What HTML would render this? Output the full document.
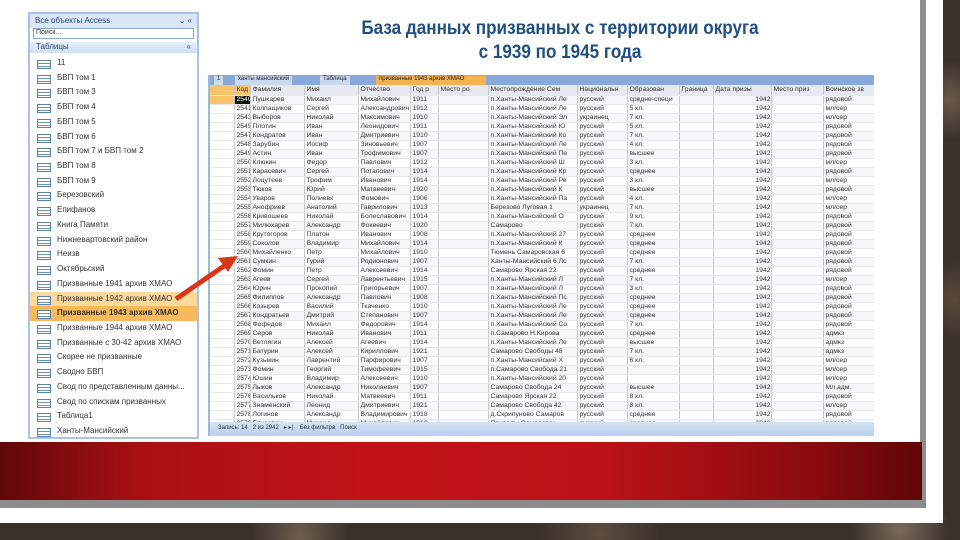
<!DOCTYPE html>
<html><head><meta charset="utf-8">
<style>
*{margin:0;padding:0;box-sizing:border-box}
body{width:960px;height:540px;overflow:hidden;position:relative;background:#3b302a;font-family:"Liberation Sans",sans-serif}
.bg{position:absolute;inset:0;background:
 radial-gradient(circle at 950px 100px,#6a5a4c,transparent 40px),
 radial-gradient(circle at 955px 300px,#5a4a3c,transparent 40px),
 radial-gradient(circle at 900px 530px,#7a6a5c,transparent 50px),
 radial-gradient(circle at 300px 535px,#6e5e50,transparent 50px),
 radial-gradient(circle at 600px 535px,#5d4d40,transparent 60px),
 #3b302a}
.slide{position:absolute;left:0;top:0;width:943px;height:523px;background:#fff}
.rborder{position:absolute;left:920px;top:0;width:6px;height:508px;background:#8f8f8f}
.band{position:absolute;left:0;top:442px;width:922px;height:58px;background:linear-gradient(90deg,#600808 0%,#a81014 15%,#c21318 40%,#bc1217 65%,#8a0b0e 88%,#5e0606 100%)}
.gbar{position:absolute;left:0;top:500px;width:926px;height:8px;background:#8c8c8c}
.nav{position:absolute;left:28px;top:12px;width:171px;height:427px;background:#fff;border:2px solid #a9c3e6;font-size:8px;color:#333}
.nav .tb{height:14px;background:#dbe7f7;padding:2px 5px;color:#2a4a7a}
.nav .srch{margin:0 3px;height:11px;border:1px solid #8aa8d6;font-size:7px;padding-left:2px}
.nav .sec{margin-top:3px;height:11px;background:linear-gradient(#e8f0fb,#cfdff4);padding-left:6px;color:#2a4a7a;margin-bottom:3px}
.it{height:14.72px;line-height:14.72px;padding-left:27px;position:relative;white-space:nowrap;overflow:hidden}
.it:before{content:"";position:absolute;left:7px;top:4px;width:12px;height:7px;border:1px solid #5a7fb0;background:repeating-linear-gradient(#fff 0 2px,#6d8fc0 2px 3px)}
.h1{background:#fcd99c}.h2{background:#f7b95a;font-weight:bold}
.title{position:absolute;left:260px;width:600px;text-align:center;color:#1f4f80;font-weight:bold;font-size:19px;transform:scaleX(.9)}
.tbl{position:absolute;left:208px;top:75px;width:666px;height:361px;background:#fff;border-left:2px solid #9bb7dc;overflow:hidden}
.tabs{height:10px;background:#87a9dc;font-size:6px;position:relative}
.tabs span{position:absolute;top:1px;height:9px;background:#c9d9f0;padding:0 3px;color:#223}
table{border-collapse:collapse;table-layout:fixed;width:664px;font-size:6.8px;color:#333}
td,th{height:8.35px;line-height:8px;border-right:1px solid #c8c8c8;border-bottom:1px solid #e8e8e8;white-space:nowrap;overflow:hidden;padding-left:2px;font-weight:normal;text-align:left}
th{background:#e6e9ef;color:#333;height:10px}
tr:nth-child(even) td{background:#f6f7f9}
td.s{background:#fff!important;border-right:1px solid #ccc}
.foot{position:absolute;left:0;bottom:0;width:100%;height:14px;background:linear-gradient(#d5e3f6,#b9cfee);font-size:6px;color:#333;padding:2px 8px}
.arrow{position:absolute;left:0;top:0}
</style></head><body>
<div class="bg"></div>
<div class="slide"></div>
<div class="rborder"></div>
<div class="band"></div>
<div class="gbar"></div>

<div class="nav">
<div class="tb">Все объекты Access <span style="float:right">⌄ «</span></div>
<div class="srch">Поиск...</div>
<div class="sec">Таблицы <span style="float:right;padding-right:6px">«</span></div>
<div class="it">11</div>
<div class="it">БВП том 1</div>
<div class="it">БВП том 3</div>
<div class="it">БВП том 4</div>
<div class="it">БВП том 5</div>
<div class="it">БВП том 6</div>
<div class="it">БВП том 7 и БВП том 2</div>
<div class="it">БВП том 8</div>
<div class="it">БВП том 9</div>
<div class="it">Березовский</div>
<div class="it">Епифанов</div>
<div class="it">Книга Памяти</div>
<div class="it">Нижневартовский район</div>
<div class="it">Неизв</div>
<div class="it">Октябрьский</div>
<div class="it">Призванные 1941 архив ХМАО</div>
<div class="it h1">Призванные 1942 архив ХМАО</div>
<div class="it h2">Призванные 1943 архив ХМАО</div>
<div class="it">Призванные 1944 архив ХМАО</div>
<div class="it">Призванные с 30-42 архив ХМАО</div>
<div class="it">Скорее не призванные</div>
<div class="it">Сводно БВП</div>
<div class="it">Свод по представленным данны...</div>
<div class="it">Свод по спискам призванных</div>
<div class="it">Таблица1</div>
<div class="it">Ханты-Мансийский</div>
</div>

<div class="title" style="top:18px">База данных призванных  с территории округа</div>
<div class="title" style="top:42px">с 1939 по 1945 года</div>

<div class="tbl">
<div class="tabs"><span style="left:4px">1</span><span style="left:25px">ханты мансийский</span><span style="left:110px">Таблица</span><span style="left:166px;background:#f6b24f;width:110px">призванные 1943 архив ХМАО</span></div>
<table>
<colgroup><col style="width:24px"><col style="width:16px"><col style="width:54px"><col style="width:54px"><col style="width:52px"><col style="width:28px"><col style="width:50px"><col style="width:89px"><col style="width:50px"><col style="width:52px"><col style="width:34px"><col style="width:58px"><col style="width:52px"><col style="width:51px"></colgroup>
<tr><th style="background:#f6c46a"></th><th style="background:#f6c46a">Код</th><th>Фамилия</th><th>Имя</th><th>Отчество</th><th>Год р</th><th>Место ро</th><th>Местопрождение Сем</th><th>Национальн</th><th>Образован</th><th>Граница</th><th>Дата призы</th><th>Место приз</th><th>Воинское зв</th></tr>
<tr><td class="s" style="background:#f8c46a!important"></td><td style="background:#111;color:#fff">2540</td><td>Пушкарев</td><td>Михаил</td><td>Михайлович</td><td>1911</td><td></td><td>п.Ханты-Мансийский Ле</td><td>русский</td><td>средне-специ</td><td></td><td style="text-align:right">1942</td><td></td><td>рядовой</td></tr>
<tr><td class="s"></td><td>2541</td><td>Колпащиков</td><td>Сергей</td><td>Александрович</td><td>1912</td><td></td><td>п.Ханты-Мансийский Ле</td><td>русский</td><td>5 кл.</td><td></td><td style="text-align:right">1942</td><td></td><td>мл/сер</td></tr>
<tr><td class="s"></td><td>2543</td><td>Выборов</td><td>Николай</td><td>Максимович</td><td>1910</td><td></td><td>п.Ханты-Мансийский Эл</td><td>украинец</td><td>7 кл.</td><td></td><td style="text-align:right">1942</td><td></td><td>мл/сер</td></tr>
<tr><td class="s"></td><td>2545</td><td>Плотин</td><td>Иван</td><td>Леонидович</td><td>1911</td><td></td><td>п.Ханты-Мансийский Ю</td><td>русский</td><td>5 кл.</td><td></td><td style="text-align:right">1942</td><td></td><td>рядовой</td></tr>
<tr><td class="s"></td><td>2547</td><td>Кондратов</td><td>Иван</td><td>Дмитриевич</td><td>1910</td><td></td><td>п.Ханты-Мансийский Ко</td><td>русский</td><td>7 кл.</td><td></td><td style="text-align:right">1942</td><td></td><td>рядовой</td></tr>
<tr><td class="s"></td><td>2548</td><td>Зарубин</td><td>Иосиф</td><td>Зиновьевич</td><td>1907</td><td></td><td>п.Ханты-Мансийский Ле</td><td>русский</td><td>4 кл.</td><td></td><td style="text-align:right">1942</td><td></td><td>рядовой</td></tr>
<tr><td class="s"></td><td>2549</td><td>Астин</td><td>Иван</td><td>Трофимович</td><td>1907</td><td></td><td>п.Ханты-Мансийский Пе</td><td>русский</td><td>высшее</td><td></td><td style="text-align:right">1942</td><td></td><td>рядовой</td></tr>
<tr><td class="s"></td><td>2550</td><td>Клюкин</td><td>Федор</td><td>Павлович</td><td>1912</td><td></td><td>п.Ханты-Мансийский Ш</td><td>русский</td><td>3 кл.</td><td></td><td style="text-align:right">1942</td><td></td><td>мл/сер</td></tr>
<tr><td class="s"></td><td>2551</td><td>Карасевич</td><td>Сергей</td><td>Потапович</td><td>1914</td><td></td><td>п.Ханты-Мансийский Кр</td><td>русский</td><td>среднее</td><td></td><td style="text-align:right">1942</td><td></td><td>рядовой</td></tr>
<tr><td class="s"></td><td>2552</td><td>Лоцутеев</td><td>Трофим</td><td>Иванович</td><td>1914</td><td></td><td>п.Ханты-Мансийский Ре</td><td>русский</td><td>3 кл.</td><td></td><td style="text-align:right">1942</td><td></td><td>мл/сер</td></tr>
<tr><td class="s"></td><td>2553</td><td>Тюков</td><td>Юрий</td><td>Матвеевич</td><td>1920</td><td></td><td>п.Ханты-Мансийский К</td><td>русский</td><td>высшее</td><td></td><td style="text-align:right">1942</td><td></td><td>рядовой</td></tr>
<tr><td class="s"></td><td>2554</td><td>Уваров</td><td>Полиевк</td><td>Фомович</td><td>1906</td><td></td><td>п.Ханты-Мансийский Па</td><td>русский</td><td>4 кл.</td><td></td><td style="text-align:right">1942</td><td></td><td>мл/сер</td></tr>
<tr><td class="s"></td><td>2555</td><td>Анофриев</td><td>Анатолий</td><td>Гаврилович</td><td>1913</td><td></td><td>Березово Луговая 1</td><td>украинец</td><td>7 кл.</td><td></td><td style="text-align:right">1942</td><td></td><td>мл/сер</td></tr>
<tr><td class="s"></td><td>2556</td><td>Кривошеев</td><td>Николай</td><td>Болеславович</td><td>1914</td><td></td><td>п.Ханты-Мансийский О</td><td>русский</td><td>9 кл.</td><td></td><td style="text-align:right">1942</td><td></td><td>рядовой</td></tr>
<tr><td class="s"></td><td>2557</td><td>Милюхарев</td><td>Александр</td><td>Фокеевич</td><td>1920</td><td></td><td>Самарово</td><td>русский</td><td>7 кл.</td><td></td><td style="text-align:right">1942</td><td></td><td>рядовой</td></tr>
<tr><td class="s"></td><td>2558</td><td>Крутогоров</td><td>Платон</td><td>Иванович</td><td>1908</td><td></td><td>п.Ханты-Мансийский 27</td><td>русский</td><td>среднее</td><td></td><td style="text-align:right">1942</td><td></td><td>рядовой</td></tr>
<tr><td class="s"></td><td>2559</td><td>Соколов</td><td>Владимир</td><td>Михайлович</td><td>1914</td><td></td><td>п.Ханты-Мансийский К</td><td>русский</td><td>среднее</td><td></td><td style="text-align:right">1942</td><td></td><td>рядовой</td></tr>
<tr><td class="s"></td><td>2560</td><td>Михайленко</td><td>Петр</td><td>Михайлович</td><td>1910</td><td></td><td>Тюмень Самаровская 6</td><td>русский</td><td>среднее</td><td></td><td style="text-align:right">1942</td><td></td><td>рядовой</td></tr>
<tr><td class="s"></td><td>2561</td><td>Сумкин</td><td>Гурий</td><td>Родионович</td><td>1907</td><td></td><td>Ханты-Мансийский 6.Лс</td><td>русский</td><td>7 кл.</td><td></td><td style="text-align:right">1942</td><td></td><td>рядовой</td></tr>
<tr><td class="s"></td><td>2562</td><td>Фомин</td><td>Петр</td><td>Алексеевич</td><td>1914</td><td></td><td>Самарово Ярская 22</td><td>русский</td><td>среднее</td><td></td><td style="text-align:right">1942</td><td></td><td>рядовой</td></tr>
<tr><td class="s"></td><td>2563</td><td>Агеев</td><td>Сергей</td><td>Лаврентьевич</td><td>1915</td><td></td><td>п.Ханты-Мансийский Л</td><td>русский</td><td>7 кл.</td><td></td><td style="text-align:right">1942</td><td></td><td>мл/сер</td></tr>
<tr><td class="s"></td><td>2564</td><td>Юрин</td><td>Прокопий</td><td>Григорьевич</td><td>1907</td><td></td><td>п.Ханты-Мансийский Л</td><td>русский</td><td>3 кл.</td><td></td><td style="text-align:right">1942</td><td></td><td>рядовой</td></tr>
<tr><td class="s"></td><td>2565</td><td>Филиппов</td><td>Александр</td><td>Павлович</td><td>1908</td><td></td><td>п.Ханты-Мансийский Пс</td><td>русский</td><td>среднее</td><td></td><td style="text-align:right">1942</td><td></td><td>рядовой</td></tr>
<tr><td class="s"></td><td>2566</td><td>Козырев</td><td>Василий</td><td>Ткаченко</td><td>1910</td><td></td><td>п.Ханты-Мансийский Ле</td><td>русский</td><td>среднее</td><td></td><td style="text-align:right">1942</td><td></td><td>рядовой</td></tr>
<tr><td class="s"></td><td>2567</td><td>Кондратьев</td><td>Дмитрий</td><td>Степанович</td><td>1907</td><td></td><td>п.Ханты-Мансийский Ле</td><td>русский</td><td>среднее</td><td></td><td style="text-align:right">1942</td><td></td><td>рядовой</td></tr>
<tr><td class="s"></td><td>2568</td><td>Фофедов</td><td>Михаил</td><td>Федорович</td><td>1914</td><td></td><td>п.Ханты-Мансийский Со</td><td>русский</td><td>7 кл.</td><td></td><td style="text-align:right">1942</td><td></td><td>рядовой</td></tr>
<tr><td class="s"></td><td>2569</td><td>Серов</td><td>Николай</td><td>Иванович</td><td>1911</td><td></td><td>п.Самарово Н.Кирова</td><td>русский</td><td>среднее</td><td></td><td style="text-align:right">1942</td><td></td><td>адмкз</td></tr>
<tr><td class="s"></td><td>2570</td><td>Ветлягин</td><td>Алексей</td><td>Агеевич</td><td>1914</td><td></td><td>п.Ханты-Мансийский Ле</td><td>русский</td><td>высшее</td><td></td><td style="text-align:right">1942</td><td></td><td>адмкз</td></tr>
<tr><td class="s"></td><td>2571</td><td>Батурин</td><td>Алексей</td><td>Кириллович</td><td>1921</td><td></td><td>Самарово Свободы 48</td><td>русский</td><td>7 кл.</td><td></td><td style="text-align:right">1942</td><td></td><td>адмкз</td></tr>
<tr><td class="s"></td><td>2572</td><td>Кузьмин</td><td>Лаврентий</td><td>Парфирович</td><td>1907</td><td></td><td>п.Ханты-Мансийский Х</td><td>русский</td><td>6 кл.</td><td></td><td style="text-align:right">1942</td><td></td><td>мл/сер</td></tr>
<tr><td class="s"></td><td>2573</td><td>Фомин</td><td>Георгий</td><td>Тимофеевич</td><td>1915</td><td></td><td>п.Самарово Свобода 21</td><td>русский</td><td></td><td></td><td style="text-align:right">1942</td><td></td><td>мл/сер</td></tr>
<tr><td class="s"></td><td>2574</td><td>Юшин</td><td>Владимир</td><td>Алексеевич</td><td>1910</td><td></td><td>п.Ханты-Мансийский 20</td><td>русский</td><td></td><td></td><td style="text-align:right">1942</td><td></td><td>мл/сер</td></tr>
<tr><td class="s"></td><td>2575</td><td>Лыков</td><td>Александр</td><td>Николаевич</td><td>1907</td><td></td><td>Самарово Свобода 24</td><td>русский</td><td>высшее</td><td></td><td style="text-align:right">1942</td><td></td><td>Мл.адм.</td></tr>
<tr><td class="s"></td><td>2576</td><td>Васильков</td><td>Николай</td><td>Матвеевич</td><td>1911</td><td></td><td>Самарово Ярская 22</td><td>русский</td><td>8 кл.</td><td></td><td style="text-align:right">1942</td><td></td><td>рядовой</td></tr>
<tr><td class="s"></td><td>2577</td><td>Знаменский</td><td>Леонид</td><td>Дмитриевич</td><td>1921</td><td></td><td>Самарово Свобода 42</td><td>русский</td><td>8 кл.</td><td></td><td style="text-align:right">1942</td><td></td><td>мл/сер</td></tr>
<tr><td class="s"></td><td>2578</td><td>Логинов</td><td>Александр</td><td>Владимирович</td><td>1918</td><td></td><td>д.Скрипуново Самаров</td><td>русский</td><td>среднее</td><td></td><td style="text-align:right">1942</td><td></td><td>рядовой</td></tr>
<tr><td class="s"></td><td>2579</td><td>Ерусевич</td><td>Михаил</td><td>Михайлович</td><td>1910</td><td></td><td>Приводы Самаровск</td><td>русский</td><td>среднее</td><td></td><td style="text-align:right">1942</td><td></td><td>рядовой</td></tr>
<tr><td class="s"></td><td>2580</td><td>Шагин</td><td>Василий</td><td>Яковлевич</td><td>1921</td><td></td><td>ст.Кондинская Окса</td><td>русский</td><td>н/среднее</td><td></td><td style="text-align:right">1942</td><td></td><td>рядовой</td></tr>
<tr><td class="s"></td><td>2581</td><td>Петров</td><td>Константин</td><td>Петрович</td><td>1910</td><td></td><td>Цинга Самаровский</td><td>ханты</td><td>среднее</td><td></td><td style="text-align:right">1942</td><td></td><td>рядовой</td></tr>
<tr><td class="s"></td><td>2582</td><td>Сидоров</td><td>Иван</td><td>Петрович</td><td>1912</td><td></td><td>с.Ломовой Заборский</td><td>ханты</td><td>4 кл.</td><td></td><td style="text-align:right">1942</td><td></td><td>рядовой</td></tr>
</table>
<div class="foot">Запись: 14 &nbsp; 2 из 2942 &nbsp; ▸ ▸| &nbsp;&nbsp; Без фильтра &nbsp; Поиск</div>
</div>

<svg class="arrow" width="960" height="540"><line x1="176" y1="299" x2="224" y2="266" stroke="#d9361a" stroke-width="5"/><polygon points="238,256 218,258 228,272" fill="#d9361a"/></svg>
</body></html>
